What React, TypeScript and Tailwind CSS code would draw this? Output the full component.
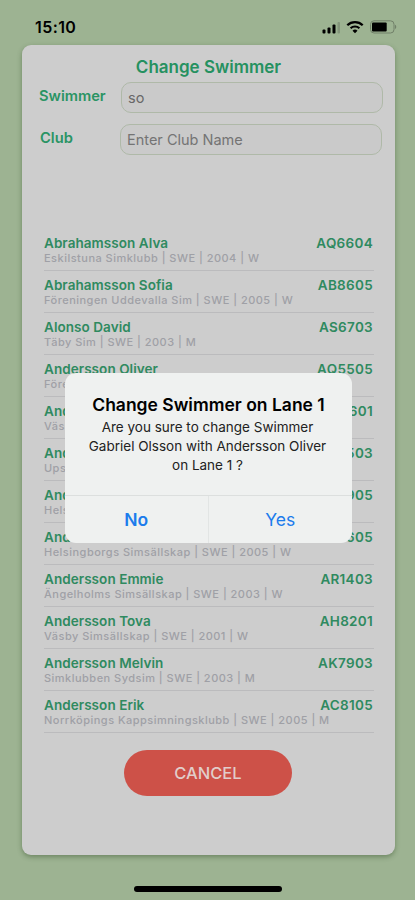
import { clsx } from "clsx";

const swimmers = [
  { name: "Abrahamsson Alva", info: "Eskilstuna Simklubb | SWE | 2004 | W", code: "AQ6604" },
  { name: "Abrahamsson Sofia", info: "Föreningen Uddevalla Sim | SWE | 2005 | W", code: "AB8605" },
  { name: "Alonso David", info: "Täby Sim | SWE | 2003 | M", code: "AS6703" },
  { name: "Andersson Oliver", info: "Före", code: "AQ5505" },
  { name: "And", info: "Väs", code: "601" },
  { name: "And", info: "Ups", code: "503" },
  { name: "And", info: "Hels", code: "905" },
  { name: "Ande", info: "Helsingborgs Simsällskap | SWE | 2005 | W", code: "605" },
  { name: "Andersson Emmie", info: "Ängelholms Simsällskap | SWE | 2003 | W", code: "AR1403" },
  { name: "Andersson Tova", info: "Väsby Simsällskap | SWE | 2001 | W", code: "AH8201" },
  { name: "Andersson Melvin", info: "Simklubben Sydsim | SWE | 2003 | M", code: "AK7903" },
  { name: "Andersson Erik", info: "Norrköpings Kappsimningsklubb | SWE | 2005 | M", code: "AC8105" },
];

const StatusBar = () => (
  <header className="flex h-[45px] items-start justify-between pt-[17px] pr-[18px] pl-[35px] text-black">
    <span className="text-[16px] leading-5 font-semibold tracking-[0.4px]">15:10</span>
    <div className="flex h-5 items-center">
      {/* Signal */}
      <svg width="19" height="13" viewBox="0 0 19 13" className="mr-[5px]">
        <rect x="0.5" y="8.5" width="3" height="4" rx="1" />
        <rect x="5.5" y="6.5" width="3" height="6" rx="1" />
        <rect x="10.5" y="3.5" width="3" height="9" rx="1" />
        <rect x="15.5" y="1" width="2.5" height="11.5" rx="1" fill="#71816b" opacity="0.6" />
      </svg>
      {/* Wifi */}
      <svg width="18" height="14" viewBox="0 0 18 14" className="mr-[6px]" fill="none" stroke="currentColor">
        <path d="M1.3 5.2a11 11 0 0 1 15.4 0" strokeWidth="2.3" />
        <path d="M4.6 8.3a6.3 6.3 0 0 1 8.8 0" strokeWidth="2.1" />
        <path d="M9 13.2 6.5 10.7a3.6 3.6 0 0 1 5 0z" fill="currentColor" stroke="none" />
      </svg>
      {/* Battery */}
      <svg width="27" height="14" viewBox="0 0 27 14">
        <rect x="0.5" y="0.8" width="23.5" height="12.2" rx="3.5" fill="none" stroke="#718069" strokeWidth="1" />
        <rect x="2" y="2.6" width="14.7" height="8.8" rx="1" />
        <path d="M25 4.8c1.7.6 1.7 3.6 0 4.2z" fill="#718069" />
      </svg>
    </div>
  </header>
);

const Field = ({ label, value, placeholder, className }: { label: string; value?: string; placeholder?: string; className?: string }) => (
  <label className={clsx("flex h-[31px] items-start", className)}>
    <span className="flex-1 text-[14.7px] leading-[29px] font-semibold text-[#2a9464]">{label}</span>
    <input
      className="h-[31px] w-[262px] rounded-[10px] border border-[#afb9a8] bg-[#cacaca] px-[6px] text-[14.5px] text-[#686868] outline-none placeholder:text-[#747474]"
      defaultValue={value}
      placeholder={placeholder}
    />
  </label>
);

const SwimmerRow = ({ name, info, code }: { name: string; info: string; code: string }) => (
  <li className="flex h-[42px] items-start justify-between border-b border-[#bbbbbd] pt-[5px]">
    <div className="min-w-0">
      <p className="text-[13.5px] leading-[18px] font-semibold tracking-[0.06px] text-[#2f8a60]">{name}</p>
      <p className="text-[11px] leading-[13px] font-medium tracking-[0.48px] whitespace-nowrap text-[#9fa0a6]">{info}</p>
    </div>
    <span className="shrink-0 pr-px text-[13.5px] leading-[18px] font-semibold tracking-[0.3px] text-[#2f8a60]">{code}</span>
  </li>
);

const ConfirmDialog = () => (
  <div
    role="alertdialog"
    className="absolute top-[373px] left-[65px] flex h-[170px] w-[287px] flex-col overflow-hidden rounded-[11px] bg-[#eff1f0] text-center text-black"
  >
    <div className="flex-1 pt-[20px]">
      <h2 className="pb-px text-[17.5px] leading-[24px] font-semibold">Change Swimmer on Lane 1</h2>
      <p className="pr-[2px] text-[13.5px] leading-[19px] text-[#222]">
        Are you sure to change Swimmer
        <br />
        Gabriel Olsson with Andersson Oliver
        <br />
        on Lane 1 ?
      </p>
    </div>
    <div className="grid h-[48px] grid-cols-2 border-t border-[#dcdfde] text-[17.5px] text-[#1c7cec]">
      <button className="border-r border-[#e2e5e4] pt-px font-semibold">No</button>
      <button className="pt-px">Yes</button>
    </div>
  </div>
);

export default function App() {
  return (
    <div className="relative flex h-[900px] w-[415px] flex-col overflow-hidden bg-[#9db392] font-[Inter,sans-serif]">
      <StatusBar />

      <main className="ml-[22px] flex h-[810px] w-[373px] flex-col rounded-[9px] bg-[#cdcdcd] shadow-[0_2px_5px_rgba(50,80,40,0.45)]">
        <h1 className="pt-[11px] text-center text-[17px] leading-[22px] font-semibold text-[#259160]">Change Swimmer</h1>
        <Field label="Swimmer" value="so" className="mt-[4px] mr-[12px] ml-[17px]" />
        <Field label="Club" placeholder="Enter Club Name" className="mt-[11px] mr-[13px] ml-[18px]" />

        <ul className="mt-[74px] ml-[22px] w-[330px]">
          {swimmers.map((swimmer, i) => (
            <SwimmerRow key={i} {...swimmer} />
          ))}
        </ul>

        <button className="mt-[17px] ml-[102px] h-[46px] w-[168px] rounded-full bg-[#cd5148] pt-px text-[16.5px] font-medium text-[#e2cdca]">
          CANCEL
        </button>
      </main>

      <div className="mt-[31px] ml-[134px] h-[6px] w-[148px] rounded-full bg-black" />

      <ConfirmDialog />
    </div>
  );
}
